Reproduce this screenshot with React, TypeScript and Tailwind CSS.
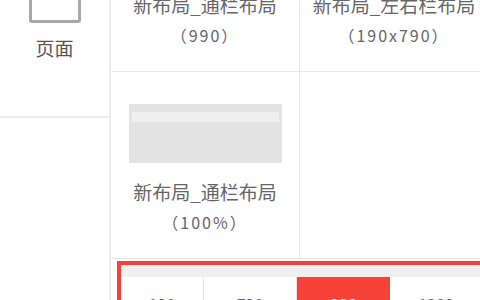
import React from 'react'

const font = { fontFamily: '"Noto Sans CJK SC", "Noto Sans", sans-serif' }

type Layout = { name: string; size: string; bar?: boolean }

const layouts: Layout[] = [
  { name: '新布局_通栏布局', size: '（990）' },
  { name: '新布局_左右栏布局', size: '（190x790）' },
  { name: '新布局_通栏布局', size: '（100%）', bar: true },
]

function LayoutCell({ item }: { item: Layout }) {
  return (
    <div className="flex h-[187px] w-[189px] shrink-0 flex-col items-center border-r border-b border-[#e8e8e8] pt-8">
      <div className="h-[59px] w-[153px] bg-[#e3e3e3] px-[3px] pt-[8px]">
        {item.bar && <div className="h-[10px] w-full bg-[#efefef]" />}
      </div>
      <div className="mt-[14px] text-[19px] leading-[30px] text-[#666]">{item.name}</div>
      <div className="text-[16px] leading-[30px] tracking-[2px] text-[#666]">{item.size}</div>
    </div>
  )
}

const widths = ['190', '790', '990', '1200']

export default function App() {
  return (
    <div className="flex h-[300px] w-[480px] overflow-hidden bg-white" style={font}>
      <div className="flex w-[111px] shrink-0 flex-col border-r-2 border-[#ececec]">
        <div className="flex h-[118px] flex-col items-center border-b-2 border-[#ececec]">
          <div className="-mt-[31px] h-[54px] w-[52px] rounded-[3px] border-[3px] border-[#a8a8a8]" />
          <div className="mt-[13px] text-[19px] leading-[24px] text-[#555]">页面</div>
        </div>
      </div>
      <div className="flex min-w-0 flex-1 flex-col">
        <div className="-mt-[115px] flex w-[378px] flex-wrap">
          {layouts.map((l, i) => (
            <LayoutCell key={i} item={l} />
          ))}
          <div className="h-[187px] w-[189px] border-b border-[#e8e8e8]" />
        </div>
        <div className="ml-[6px] mt-[2px] w-[400px] border-4 border-[#f5413c] bg-white">
          <div className="h-[12px] bg-[#f0f0f0]" />
          <div className="flex">
            {widths.map((w, i) => (
              <div
                key={w}
                className={
                  i === 2
                    ? 'w-[93px] bg-[#f5433a] pt-[15px] text-center text-[16px] text-white'
                    : i === 0
                    ? 'w-[83px] border-r border-[#e5e5e5] pt-[15px] text-center text-[16px] text-[#666]'
                    : 'w-[93px] border-r border-[#e5e5e5] pt-[15px] text-center text-[16px] text-[#666]'
                }
              >
                {w}
              </div>
            ))}
          </div>
        </div>
      </div>
    </div>
  )
}
